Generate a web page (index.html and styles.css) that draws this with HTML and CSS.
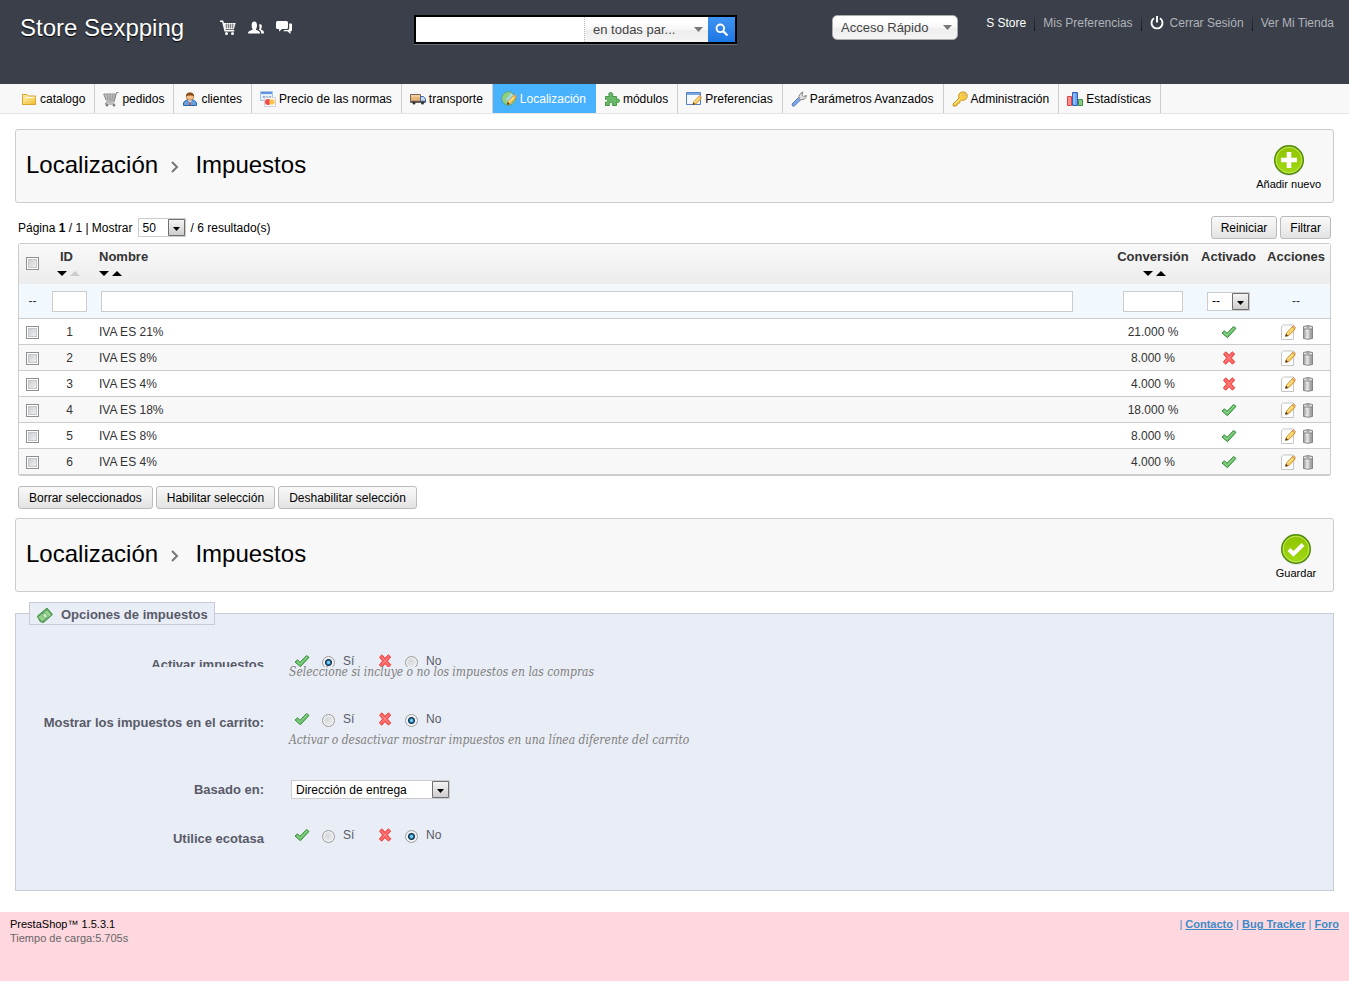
FILE: index.html
```html
<!DOCTYPE html>
<html lang="es">
<head>
  <meta charset="UTF-8">
  <meta name="viewport" content="width=device-width, initial-scale=1.0">
  <title>Impuestos - Store Sexpping</title>
  <link rel="stylesheet" href="styles.css">
</head>
<body>
  <svg class="sprite" aria-hidden="true">
    <defs>
      <linearGradient id="g-green" x1="0" y1="0" x2="0" y2="1"><stop offset="0" stop-color="#8fc400"/><stop offset="1" stop-color="#a0d911"/></linearGradient>
      <linearGradient id="g-gold" x1="0" y1="0" x2="1" y2="1"><stop offset="0" stop-color="#fff2a8"/><stop offset="1" stop-color="#eeb92c"/></linearGradient>
      <linearGradient id="g-can" x1="0" y1="0" x2="1" y2="0"><stop offset="0" stop-color="#8c8c8c"/><stop offset=".35" stop-color="#f4f4f4"/><stop offset="1" stop-color="#8c8c8c"/></linearGradient>
    </defs>
    <symbol id="check" viewBox="0 0 16 16">
      <path d="M1 9l2.500-2.200L6 9.300 12.600 2.500 15 4.400 6.400 13.700z" fill="#6cc26c" stroke="#3c8f3f" stroke-linejoin="round"/>
      <path d="M3 8.500l3 2.800 7-7.300" fill="none" stroke="#93d893"/>
    </symbol>
    <symbol id="cross" viewBox="0 0 16 16">
      <path d="M2.500 4L5 1.800l3 3.400 3.300-3.400L13.700 4l-3.300 4 3.400 3.800-2.300 2.400L8 10.700 4.800 14.200 2.300 12l3.300-4z" fill="#ff5f5d" stroke="#ea4a4a" stroke-linejoin="round"/>
      <path d="M4.500 4l7 8M11.500 4l-7 8" stroke="#ff8886" fill="none"/>
    </symbol>
    <symbol id="pencil" viewBox="0 0 16 16">
      <path d="M5 13l1-3.500L12 3l3 2.500-6.500 6.700z" fill="#fbd062" stroke="#c98a24" stroke-linejoin="round"/>
      <path d="M12 3l1.300-1.300 2.200 2-1 1.500z" fill="#f3b48c" stroke="#c98a24" stroke-width=".7"/>
      <path d="M5 13l.5-2 1.500 1.400z" fill="#5a4020" stroke="#5a4020"/>
      <path d="M7 10l5.500-5.800" stroke="#fff0ac"/>
    </symbol>
    <symbol id="edit" viewBox="0 0 16 16">
      <path d="M1.500 2.500l2-1.500h10v14.500h-12z" fill="#fff" stroke="#c5c5c5"/>
      <use href="#pencil" width="15" height="15" x="1"/>
    </symbol>
    <symbol id="trash" viewBox="0 0 16 16">
      <path d="M3.500 4.500h9v10q-4.500 1.400-9 0z" fill="url(#g-can)" stroke="#858585"/>
      <path d="M3.500 2.500q4.500-1.800 9 0v2.500h-9z" fill="#e2e2e2" stroke="#858585"/>
      <path d="M6 7v6M10 7v6" stroke="#aaa" stroke-width=".8"/>
      <path d="M6.500 3h3" stroke="#777"/>
    </symbol>
    <symbol id="cart" viewBox="0 0 16 16">
      <path d="M0 1.300h2.700L5 10.700h9.300" fill="none" stroke="#fff" stroke-width="1.400"/>
      <path d="M3.500 3h12.200l-1.900 6.200H5z" fill="#fff"/>
      <path d="M5 5h9.500M5.500 7h8.500M6.500 3.500v5M8.500 3.500v5M10.500 3.500v5M12.500 3.500v5" stroke="#3a3f4a" stroke-width=".5"/>
      <circle cx="6.500" cy="13.500" r="1.500" fill="#fff"/><circle cx="12.500" cy="13.500" r="1.500" fill="#fff"/>
    </symbol>
    <symbol id="people" viewBox="0 0 16 16">
      <path d="M0 13.500c0-2.200 1.500-2.500 4.600-3.700.4-.9-1-1.500-1-4.300 0-2.500 1-4 2.700-4S9 3 9 5.500c0 2.800-1.300 3.400-1 4.300 2.800 1.200 4 1.500 4 3.700z" fill="#fff"/>
      <path d="M11 4.800c2-1.300 3.500.5 2.600 3-.6 1.200-.7 1.500-.3 2 2 .7 2.700 1.500 2.700 3.700h-2.800c0-2-.8-3-2.200-3.700.8-1.600.7-3 0-5z" fill="#fff"/>
    </symbol>
    <symbol id="chat" viewBox="0 0 16 16">
      <path d="M1.500 1h9Q12 1 12 2.500v5Q12 9 10.500 9H6l-3 2.500V9H1.500Q0 9 0 7.500v-5Q0 1 1.500 1z" fill="#fff"/>
      <path d="M13.200 3.500H15q1 0 1 1V10q0 1.300-1.500 1.300V14L11.300 11.300H7L8.700 10h3q1.500 0 1.500-1.700z" fill="#fff"/>
    </symbol>
    <symbol id="power" viewBox="0 0 14 14">
      <path d="M4 2.300a5.500 5.500 0 1 0 6 0M7 0v6.500" fill="none" stroke="#fff" stroke-width="1.900"/>
    </symbol>
    <symbol id="search" viewBox="0 0 14 14">
      <circle cx="5.300" cy="5.300" r="3.800" fill="none" stroke="#fff" stroke-width="1.900"/>
      <path d="M8 8l4.500 4.500" stroke="#fff" stroke-width="2.300"/>
    </symbol>
    <symbol id="folder" viewBox="0 0 16 16">
      <path d="M1.500 13.500v-10h4.500l1.500 1.500h7v8.500z" fill="#fbe596" stroke="#d9a52c" stroke-linejoin="round"/>
      <path d="M2 13l1-5.500h4l1-1h6.500L14 13z" fill="url(#g-gold)"/>
      <path d="M5.500 6.500h7" stroke="#fff"/>
    </symbol>
    <symbol id="basket" viewBox="0 0 16 16">
      <path d="M15.500 1.500h-2L11 11H3.500M.7 3h12l-1.500 6H3z" fill="#d5d5d5" stroke="#8c8c8c"/>
      <path d="M2 5h10M2.500 7h9M4 3l1 6M7 3v6M10 3L9 9" stroke="#8e8e8e" stroke-width=".7"/>
      <path d="M4 11l-2 2h10" fill="none" stroke="#888"/>
      <circle cx="4" cy="14.300" r="1.200" fill="#777"/><circle cx="11" cy="14.300" r="1.200" fill="#777"/>
    </symbol>
    <symbol id="client" viewBox="0 0 16 16">
      <path d="M1.500 14.500v-3L4.500 9h7l3 2.500v3z" fill="#65a0dd" stroke="#2c67a8"/>
      <path d="M6 9h4l-2 3z" fill="#fff"/><path d="M8 9.500l1 4-1 1-1-1z" fill="#d04432"/>
      <circle cx="8" cy="5.500" r="3.700" fill="#f3c08c" stroke="#a9652c" stroke-width=".7"/>
      <path d="M4 5.500C3.500 0 12.500 0 12 5.500 11 4 5 4 4 5.500z" fill="#8a4a18"/>
    </symbol>
    <symbol id="cards" viewBox="0 0 16 16">
      <path d="M.5.500h12v9H.5z" fill="#e8f1fa" stroke="#a8c4e4"/><path d="M1 1h11v2H1z" fill="#6494dc"/>
      <path d="M3 5l1 2 1-2M7 5v2M9 7l1-2 1 2" fill="none" stroke="#7b9ccb"/>
      <path d="M4.500 6.500h11v9h-11z" fill="#fff" stroke="#d0cfd5"/>
      <circle cx="8" cy="11" r="3" fill="#f04b4b"/><circle cx="12" cy="11" r="2.700" fill="#ffc54a"/>
    </symbol>
    <symbol id="truck" viewBox="0 0 16 16">
      <path d="M.5 3.500h10v8H.5z" fill="#e8b778" stroke="#76675a"/><path d="M1 5h9" stroke="#fce2bb"/>
      <path d="M10.500 5.500h3l2 2.500v3.500h-5z" fill="#c8dcf8" stroke="#4368a8"/>
      <path d="M1 10.500h14" stroke="#555" stroke-width="1.500"/>
      <circle cx="4" cy="12" r="1.500" fill="#333"/><circle cx="12.500" cy="12" r="1.500" fill="#333"/>
    </symbol>
    <symbol id="globe" viewBox="0 0 16 16">
      <circle cx="7.500" cy="7.500" r="6.700" fill="#a6d8ee" stroke="#4f9f58"/>
      <path d="M2 4q4-4 8-2L7 6 5 8l2 3-1 3Q1 11 2 4zM10 6l4-1v5l-3 3z" fill="#8fd07c"/>
      <use href="#pencil" x="2" y="2" width="14" height="14"/>
    </symbol>
    <symbol id="puzzle" viewBox="0 0 16 16">
      <path d="M1.500 5.500h4C4 3 5 1.500 6.700 1.500S9.500 3 8.500 5.500h4v3c2-1 3-.2 3 1.200s-1 2.300-3 1.300v3.500h-4c.8-2.500-.2-3-1.500-3s-2.500.8-1.500 3h-4V11c3 1 3-3.500 0-2.500z" fill="#68b868" stroke="#48984b" stroke-linejoin="round"/>
    </symbol>
    <symbol id="prefs" viewBox="0 0 16 16">
      <path d="M.5 1.500h14v12H.5z" fill="#f5f9fe" stroke="#5481c5"/><path d="M1 2h13v2H1z" fill="#79a6e4"/>
      <use href="#pencil" x="3" y="3" width="13" height="13"/>
    </symbol>
    <symbol id="wrench" viewBox="0 0 16 16">
      <path d="M1 13L7.500 6.500l2.200 2.200L3.200 15.200Q1 15.500 1 13z" fill="#81a8e8" stroke="#5378ba"/>
      <path d="M8 7.500Q7.500 2.500 12 1L11 4l1.500 1.500L15.500 4.500Q15 9 9.500 8.700z" fill="#ddd" stroke="#888"/>
    </symbol>
    <symbol id="key" viewBox="0 0 16 16">
      <path d="M1 13l6-6C5.500 2.500 9 .5 12 1c3.200.6 4 4 2.700 6-1 2-3.500 2.700-5.200 2l-1.500 1.500-.3 1.500-2 .3L5 14.500l-3.500.8z" fill="#fbcf45" stroke="#c6922a"/>
      <circle cx="12.200" cy="3.800" r="1.100" fill="#fff" stroke="#b88320" stroke-width=".6"/><path d="M2.500 13l5-5" stroke="#fff0a0"/>
    </symbol>
    <symbol id="chart" viewBox="0 0 16 16">
      <path d="M.5 5.500h4v9h-4z" fill="#ff8e8e" stroke="#e04343"/><path d="M5.500 1.500h5v13h-5z" fill="#6fa6f2" stroke="#2f62b8"/><path d="M11.500 8.500h4v6h-4z" fill="#86cb86" stroke="#3d8d45"/>
      <path d="M7 3v10" stroke="#b5d4ff"/>
    </symbol>
    <symbol id="money" viewBox="0 0 16 16">
      <path d="M.5 9L10 1l5.500 6.500-9 8L3 14.500z" fill="#5aa75c" stroke="#4d9450"/>
      <path d="M.7 10L10 2.500l5 5.500-10 7z" fill="#94d18c" stroke="#52995a"/>
      <ellipse cx="8" cy="8.700" rx="2" ry="2.500" fill="#d0efc8" stroke="#58a060" stroke-width=".7" transform="rotate(-35 8 8.700)"/>
    </symbol>
    <symbol id="round-add" viewBox="0 0 32 32">
      <circle cx="16" cy="17" r="14.500" fill="#000" opacity=".18"/>
      <circle cx="16" cy="16" r="14.300" fill="url(#g-green)" stroke="#4f8a0c" stroke-width="1.400"/>
      <circle cx="16" cy="16" r="12.800" fill="none" stroke="#c2e560"/>
      <path d="M16 8v16M8 16h16" stroke="#fff" stroke-width="4.600"/>
    </symbol>
    <symbol id="round-check" viewBox="0 0 32 32">
      <circle cx="16" cy="17" r="14.500" fill="#000" opacity=".18"/>
      <circle cx="16" cy="16" r="14.300" fill="url(#g-green)" stroke="#4f8a0c" stroke-width="1.400"/>
      <circle cx="16" cy="16" r="12.800" fill="none" stroke="#c2e560"/>
      <path d="M9 16.500l4.500 4.500L23 11.500" fill="none" stroke="#fff" stroke-width="4"/>
    </symbol>
  </svg>

  <header class="header">
    <a class="shop-name" href="#">Store Sexpping</a>
    <div class="notifs">
      <a href="#" aria-label="Pedidos nuevos"><svg><use href="#cart"/></svg></a>
      <a href="#" aria-label="Clientes nuevos"><svg><use href="#people"/></svg></a>
      <a href="#" aria-label="Mensajes nuevos"><svg><use href="#chat"/></svg></a>
    </div>
    <form class="search-box">
      <input type="text" aria-label="Buscar">
      <select aria-label="Buscar en"><option>en todas par...</option></select>
      <button type="button" aria-label="Buscar"><svg><use href="#search"/></svg></button>
    </form>
    <select class="quick" aria-label="Acceso Rápido"><option>Acceso Rápido</option></select>
    <nav class="user-links">
      <a class="user-name" href="#">S Store</a>
      <a href="#">Mis Preferencias</a>
      <a href="#"><svg><use href="#power"/></svg>Cerrar Sesión</a>
      <a href="#">Ver Mi Tienda</a>
    </nav>
  </header>

  <nav class="menu">
    <a href="#"><svg><use href="#folder"/></svg>catalogo</a>
    <a href="#"><svg><use href="#basket"/></svg>pedidos</a>
    <a href="#"><svg><use href="#client"/></svg>clientes</a>
    <a href="#"><svg><use href="#cards"/></svg>Precio de las normas</a>
    <a href="#"><svg><use href="#truck"/></svg>transporte</a>
    <a href="#" class="active"><svg><use href="#globe"/></svg>Localización</a>
    <a href="#"><svg><use href="#puzzle"/></svg>módulos</a>
    <a href="#"><svg><use href="#prefs"/></svg>Preferencias</a>
    <a href="#"><svg><use href="#wrench"/></svg>Parámetros Avanzados</a>
    <a href="#"><svg><use href="#key"/></svg>Administración</a>
    <a href="#"><svg><use href="#chart"/></svg>Estadísticas</a>
  </nav>

  <main class="content">
    <section class="page-title">
      <h1>Localización <svg viewBox="0 0 8 12"><path d="M1 1l5 5-5 5" fill="none" stroke="#777" stroke-width="2"/></svg> Impuestos</h1>
      <a class="tool" href="#"><svg><use href="#round-add"/></svg>Añadir nuevo</a>
    </section>

    <section class="list">
      <div class="list-bar">
        <label for="per-page">Página <b>1</b> / 1 | Mostrar</label>
        <select id="per-page" class="old-select per-page"><option>50</option></select>
        <span>/ 6 resultado(s)</span>
        <div class="bar-buttons">
          <button class="button" type="button">Reiniciar</button>
          <button class="button" type="button">Filtrar</button>
        </div>
      </div>

      <table class="taxes">
        <colgroup>
          <col class="col-check"><col class="col-id"><col><col class="col-rate"><col class="col-active"><col class="col-actions">
        </colgroup>
        <thead>
          <tr>
            <th class="check"><input type="checkbox" aria-label="Seleccionar todo"></th>
            <th class="id">ID<span class="sort"><i class="down"></i><i class="up off"></i></span></th>
            <th class="name">Nombre<span class="sort"><i class="down"></i><i class="up"></i></span></th>
            <th>Conversión<span class="sort"><i class="down"></i><i class="up"></i></span></th>
            <th>Activado</th>
            <th>Acciones</th>
          </tr>
          <tr class="filter">
            <td>--</td>
            <td><input class="filter-id" type="text" aria-label="Filtrar por ID"></td>
            <td class="name"><input class="filter-name" type="text" aria-label="Filtrar por nombre"></td>
            <td><input class="filter-rate" type="text" aria-label="Filtrar por conversión"></td>
            <td><select class="old-select filter-active" aria-label="Filtrar por activado"><option>--</option></select></td>
            <td>--</td>
          </tr>
        </thead>
        <tbody>
          <tr>
            <td><input type="checkbox" aria-label="IVA ES 21%"></td><td>1</td><td class="name">IVA ES 21%</td><td>21.000 %</td>
            <td><svg><use href="#check"/></svg></td>
            <td class="actions"><a href="#" aria-label="Editar"><svg><use href="#edit"/></svg></a><a href="#" aria-label="Borrar"><svg><use href="#trash"/></svg></a></td>
          </tr>
          <tr>
            <td><input type="checkbox" aria-label="IVA ES 8%"></td><td>2</td><td class="name">IVA ES 8%</td><td>8.000 %</td>
            <td><svg><use href="#cross"/></svg></td>
            <td class="actions"><a href="#" aria-label="Editar"><svg><use href="#edit"/></svg></a><a href="#" aria-label="Borrar"><svg><use href="#trash"/></svg></a></td>
          </tr>
          <tr>
            <td><input type="checkbox" aria-label="IVA ES 4%"></td><td>3</td><td class="name">IVA ES 4%</td><td>4.000 %</td>
            <td><svg><use href="#cross"/></svg></td>
            <td class="actions"><a href="#" aria-label="Editar"><svg><use href="#edit"/></svg></a><a href="#" aria-label="Borrar"><svg><use href="#trash"/></svg></a></td>
          </tr>
          <tr>
            <td><input type="checkbox" aria-label="IVA ES 18%"></td><td>4</td><td class="name">IVA ES 18%</td><td>18.000 %</td>
            <td><svg><use href="#check"/></svg></td>
            <td class="actions"><a href="#" aria-label="Editar"><svg><use href="#edit"/></svg></a><a href="#" aria-label="Borrar"><svg><use href="#trash"/></svg></a></td>
          </tr>
          <tr>
            <td><input type="checkbox" aria-label="IVA ES 8%"></td><td>5</td><td class="name">IVA ES 8%</td><td>8.000 %</td>
            <td><svg><use href="#check"/></svg></td>
            <td class="actions"><a href="#" aria-label="Editar"><svg><use href="#edit"/></svg></a><a href="#" aria-label="Borrar"><svg><use href="#trash"/></svg></a></td>
          </tr>
          <tr>
            <td><input type="checkbox" aria-label="IVA ES 4%"></td><td>6</td><td class="name">IVA ES 4%</td><td>4.000 %</td>
            <td><svg><use href="#check"/></svg></td>
            <td class="actions"><a href="#" aria-label="Editar"><svg><use href="#edit"/></svg></a><a href="#" aria-label="Borrar"><svg><use href="#trash"/></svg></a></td>
          </tr>
        </tbody>
      </table>

      <div class="bulk">
        <button class="button" type="button">Borrar seleccionados</button>
        <button class="button" type="button">Habilitar selección</button>
        <button class="button" type="button">Deshabilitar selección</button>
      </div>
    </section>

    <section class="page-title">
      <h1>Localización <svg viewBox="0 0 8 12"><path d="M1 1l5 5-5 5" fill="none" stroke="#777" stroke-width="2"/></svg> Impuestos</h1>
      <a class="tool" href="#"><svg><use href="#round-check"/></svg>Guardar</a>
    </section>

    <form>
      <fieldset class="options">
        <legend><svg><use href="#money"/></svg>Opciones de impuestos</legend>

        <div class="option clipped" role="radiogroup" aria-labelledby="l-tax">
          <span class="option-label" id="l-tax">Activar impuestos</span>
          <div class="radios">
            <svg><use href="#check"/></svg><input type="radio" name="tax" id="tax-on" checked><label for="tax-on">Sí</label>
            <svg><use href="#cross"/></svg><input type="radio" name="tax" id="tax-off"><label for="tax-off">No</label>
          </div>
        </div>
        <p class="hint">Seleccione si incluye o no los impuestos en las compras</p>

        <div class="option" role="radiogroup" aria-labelledby="l-cart">
          <span class="option-label" id="l-cart">Mostrar los impuestos en el carrito:</span>
          <div class="radios">
            <svg><use href="#check"/></svg><input type="radio" name="cart" id="cart-on"><label for="cart-on">Sí</label>
            <svg><use href="#cross"/></svg><input type="radio" name="cart" id="cart-off" checked><label for="cart-off">No</label>
          </div>
        </div>
        <p class="hint">Activar o desactivar mostrar impuestos en una línea diferente del carrito</p>

        <div class="option select-row">
          <label class="option-label" for="based-on">Basado en:</label>
          <select id="based-on" class="old-select based-on"><option>Dirección de entrega</option></select>
        </div>

        <div class="option" role="radiogroup" aria-labelledby="l-eco">
          <span class="option-label" id="l-eco">Utilice ecotasa</span>
          <div class="radios">
            <svg><use href="#check"/></svg><input type="radio" name="eco" id="eco-on"><label for="eco-on">Sí</label>
            <svg><use href="#cross"/></svg><input type="radio" name="eco" id="eco-off" checked><label for="eco-off">No</label>
          </div>
        </div>
      </fieldset>
    </form>
  </main>

  <footer class="footer">
    <div>
      <a class="version" href="#">PrestaShop™ 1.5.3.1</a><br>
      <span>Tiempo de carga:5.705s</span>
    </div>
    <div class="footer-links">| <a href="#">Contacto</a> | <a href="#">Bug Tracker</a> | <a href="#">Foro</a></div>
  </footer>
</body>
</html>
```
FILE: styles.css
```css
:root {
  --dark: #3a3f4a;
  --line: #ccc;
  --soft: #f8f8f8;
  --text: #333;
  --arrow: url("data:image/svg+xml,%3Csvg xmlns='http://www.w3.org/2000/svg' width='9' height='5'%3E%3Cpath d='M0 0h9L4.500 5z' fill='%23777'/%3E%3C/svg%3E");
  --old-arrow: url("data:image/svg+xml,%3Csvg xmlns='http://www.w3.org/2000/svg' width='17' height='17'%3E%3ClinearGradient id='a' x2='0' y2='1'%3E%3Cstop stop-color='%23f6f6f6'/%3E%3Cstop offset='1' stop-color='%23ccc'/%3E%3C/linearGradient%3E%3Cpath d='M.5.500h16v16H.5z' fill='url(%23a)' stroke='%23707070'/%3E%3Cpath d='M5 8h7l-3.500 4z'/%3E%3C/svg%3E");
}

* { box-sizing: border-box; }

body {
  margin: 0;
  min-height: 100vh;
  display: flex;
  flex-direction: column;
  background: #fff;
  color: #000;
  font: 12px/16px "Liberation Sans", Arial, Helvetica, sans-serif;
}

a { color: inherit; text-decoration: none; }

svg { width: 16px; height: 16px; flex: none; }

.sprite { position: absolute; width: 0; height: 0; }

input, select, button { font: inherit; margin: 0; }

select, input[type="checkbox"], input[type="radio"] { appearance: none; }

/* header */
.header {
  display: flex;
  align-items: flex-start;
  height: 84px;
  padding: 15px 15px 0 20px;
  background: var(--dark);
  color: #fff;
}

.shop-name {
  width: 200px;
  font-size: 24px;
  line-height: 26px;
  text-shadow: 0 1px 1px #000;
}

.notifs {
  display: flex;
  gap: 12px;
  width: 194px;
  padding-top: 5px;
}

.notifs a { height: 16px; }

.search-box {
  display: flex;
  width: 323px;
  height: 29px;
  border: 2px solid #000;
  box-shadow: 0 1px 0 #6a6d73;
}

.search-box input {
  flex: 1;
  min-width: 0;
  padding: 0 5px;
  border: 0;
  background: #fff;
}

.search-box select {
  width: 124px;
  padding: 0 8px;
  border: 0;
  border-left: 1px dotted #bbb;
  border-radius: 0;
  color: #444;
  font-size: 13px;
  background: var(--arrow) right 5px center no-repeat, linear-gradient(#fff 20%, #f6f6f6 50%, #eee 52%, #f4f4f4);
}

.search-box button {
  display: grid;
  place-items: center;
  width: 27px;
  padding: 0;
  border: 0;
  background: linear-gradient(#3f93f2, #1c77e3);
}

.search-box button svg { width: 14px; height: 14px; }

.quick {
  width: 126px;
  height: 25px;
  margin-left: 95px;
  padding: 0 8px;
  border: 1px solid #aaa;
  border-radius: 5px;
  color: #444;
  font-size: 13px;
  background: var(--arrow) right 5px center no-repeat, linear-gradient(#fff 20%, #f6f6f6 50%, #eee 52%, #f4f4f4);
}

.user-links {
  display: flex;
  margin-left: auto;
  color: #b0b3b8;
}

.user-links a {
  display: flex;
  align-items: center;
  gap: 6px;
  padding: 0 8px;
  border-right: 1px solid;
  border-image: linear-gradient(transparent, #111) 1;
  white-space: nowrap;
}

.user-links a:last-child { padding-right: 0; border: 0; }

.user-links svg { width: 14px; height: 14px; }

.user-links .user-name { color: #fff; }

/* main menu */
.menu {
  display: flex;
  height: 30px;
  padding-left: 13px;
  background: var(--soft);
  border-bottom: 1px solid #e6e6e6;
}

.menu a {
  display: flex;
  align-items: center;
  gap: 3px;
  padding: 1px 9px 0 8px;
  border-right: 1px solid var(--line);
  white-space: nowrap;
}

.menu .active {
  background: #49b2ff;
  border-color: #49b2ff;
  color: #fff;
}

/* page title blocks */
.content { padding: 15px 15px 21px; }

.page-title {
  display: flex;
  justify-content: space-between;
  height: 74px;
  padding: 14px 12px 0 10px;
  border: 1px solid var(--line);
  border-radius: 3px;
  background: var(--soft);
}

.page-title h1 {
  margin: 0;
  font-size: 24px;
  line-height: 41px;
  font-weight: normal;
}

.page-title h1 svg {
  width: 8px;
  height: 12px;
  margin: 0 10px 0 6px;
}

.tool {
  display: flex;
  flex-direction: column;
  align-items: center;
  min-width: 50px;
  font-size: 11px;
}

.tool svg { width: 32px; height: 32px; }

/* list */
.list { padding: 13px 3px 9px; }

.list-bar {
  display: flex;
  align-items: center;
  gap: 5px;
  height: 23px;
  margin-bottom: 4px;
}

.bar-buttons {
  display: flex;
  gap: 3px;
  margin-left: auto;
}

.button {
  height: 23px;
  padding: 0 10px;
  border: 1px solid #bbb;
  border-radius: 3px;
  color: #000;
  background: linear-gradient(#f9f9f9, #e3e3e3);
}

.bar-buttons .button { padding: 0 9px; }

.old-select {
  height: 19px;
  padding: 0 4px;
  border: 1px solid var(--line);
  border-radius: 0;
  color: #000;
  background: #fff var(--old-arrow) right center no-repeat;
}

.per-page { width: 48px; }

.taxes {
  width: 100%;
  table-layout: fixed;
  border: 1px solid var(--line);
  border-bottom-width: 2px;
  border-radius: 3px;
  border-spacing: 0;
  color: var(--text);
  text-align: center;
}

.col-check { width: 27px; }
.col-id { width: 47px; }
.col-rate { width: 84px; }
.col-active { width: 67px; }
.col-actions { width: 68px; }

.taxes th {
  height: 40px;
  padding: 4px 0 0;
  font-size: 13px;
  line-height: 17px;
  vertical-align: top;
  background: linear-gradient(#f9f9f9, #ececec);
}

.taxes th.check { padding-top: 10px; }

.taxes th.id { padding-right: 6px; }

.taxes td {
  height: 26px;
  padding: 0;
  border-bottom: 1px solid var(--line);
}

.taxes .name { padding-left: 6px; text-align: left; }

.taxes tbody tr:nth-child(even) { background: var(--soft); }

.taxes tbody tr:last-child td { height: 25px; border-bottom: 0; }

.taxes .filter td { height: 35px; background: #f1f9ff; }

.taxes svg { display: inline-block; vertical-align: middle; }

.taxes .actions { padding-left: 3px; }

.taxes .actions svg { margin: 0 2px; }

.sort {
  display: flex;
  justify-content: center;
  gap: 3px;
  padding: 6px 0 0 3px;
}

.name .sort { justify-content: flex-start; padding-left: 0; }

.sort i {
  border: 5px solid transparent;
  border-top: 5px solid #000;
  border-bottom: 0;
}

.sort .up { border-top: 0; border-bottom: 5px solid #000; }

.sort .off { border-bottom-color: var(--line); }

.filter input {
  height: 21px;
  border: 1px solid var(--line);
  background: #fff;
  vertical-align: middle;
}

.filter-id { width: 35px; }
.filter-name { width: 96%; margin-left: 2px; }
.filter-rate { width: 60px; }
.filter-active { width: 43px; }

input[type="checkbox"] {
  width: 13px;
  height: 13px;
  border: 1px solid #8e8f8f;
  background: linear-gradient(135deg, #c4c8cc, #f6f6f6);
  box-shadow: inset 0 0 0 1px #fff, inset 0 0 0 2px #c4c8cc;
  vertical-align: middle;
}

.bulk {
  display: flex;
  gap: 3px;
  margin-top: 10px;
}

/* options form */
.options {
  margin: 10px 0 0;
  padding: 28px 0 44px;
  border: 1px solid #c8cad8;
  background: #e9edf5;
  color: #585a69;
}

.options legend {
  display: flex;
  align-items: center;
  gap: 8px;
  height: 23px;
  margin-left: 13px;
  padding: 2px 6px 0 7px;
  border: 1px solid #c8cad8;
  background: #e9edf5;
  font-size: 13px;
  font-weight: bold;
}

.option {
  display: grid;
  grid-template-columns: 248px 1fr;
  column-gap: 27px;
  align-items: start;
}

.option.clipped { height: 14px; overflow: hidden; }

.option-label {
  height: 19px;
  padding-top: 4px;
  font-size: 13px;
  line-height: 15px;
  font-weight: bold;
  text-align: right;
}

.radios {
  display: flex;
  align-items: center;
  padding-left: 3px;
}

.radios input {
  width: 13px;
  height: 13px;
  margin: 3px 8px 0 12px;
  border: 1px solid #9a9ca0;
  border-radius: 50%;
  background: radial-gradient(circle at 40% 40%, #d5d8dc, #f4f4f4);
  box-shadow: inset 0 0 0 1px #f4f4f4;
}

.radios input:checked {
  background: radial-gradient(circle, #7ed2f5 0 1px, #1b6fa5 2px, #12324c 3px, #eee 4px);
}

.radios label { width: 34px; }

.hint {
  margin: 3px 0 33px 273px;
  color: #7f7f7f;
  font: italic 12px/14px "DejaVu Serif Condensed", "DejaVu Serif", Georgia, serif;
}

.clipped + .hint { margin: -2px 0 32px 273px; }

.select-row { margin-bottom: 28px; }

.select-row .option-label { padding-top: 2px; }

.based-on { width: 159px; }

/* footer */
.footer {
  display: flex;
  justify-content: space-between;
  flex: 1;
  padding: 5px 10px;
  background: #ffd7de;
  color: #666;
  font-size: 11px;
  line-height: 14px;
}

.version { color: #000; }

.footer-links { color: #3a8cc8; }

.footer-links a { font-weight: bold; text-decoration: underline; }
```
